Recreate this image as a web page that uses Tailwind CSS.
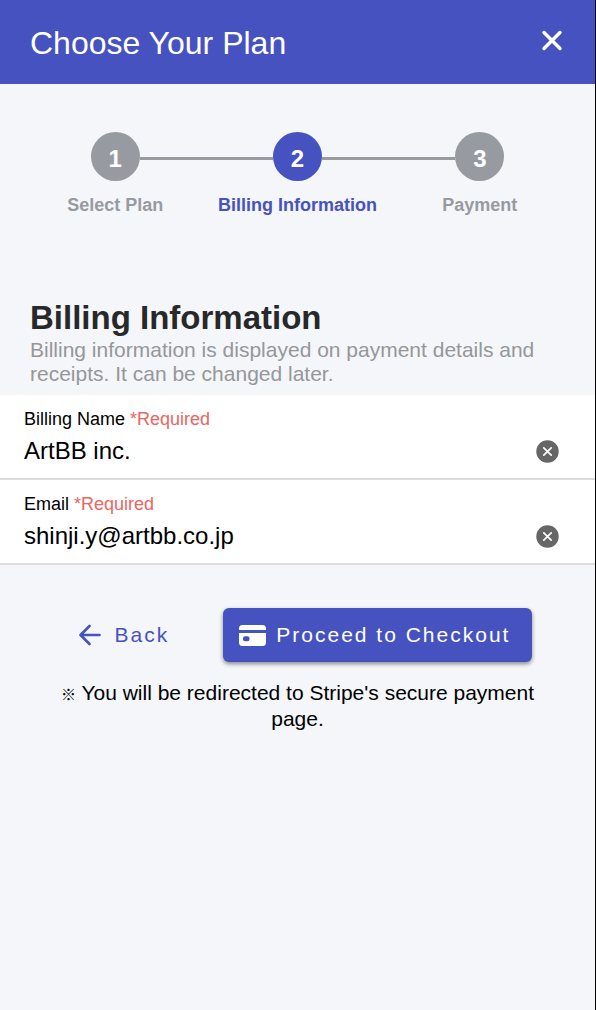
<!DOCTYPE html>
<html lang="en">
<head>
    <meta charset="UTF-8">
    <meta name="viewport" content="width=device-width, initial-scale=1.0">
    <title>Choose Your Plan</title>
    <script src="https://cdn.jsdelivr.net/npm/@tailwindcss/browser@4"></script>
</head>
<body class="min-h-screen border-r border-black bg-[#f4f6fa] font-['Liberation_Sans','Noto_Sans_CJK_JP',sans-serif] text-black">
    <header class="flex h-[84px] items-center justify-between bg-[#4652bf] pl-[30px] pr-8 text-white">
        <h1 class="pt-0.5 text-[32px] leading-10">Choose Your Plan</h1>
        <button type="button" aria-label="Close" class="pb-1">
            <svg class="size-[22px]" viewBox="0 0 22 22" fill="none" stroke="currentColor" stroke-width="3.4" stroke-linecap="round">
                <path d="M3 3.500l16 16M19 3.500L3 19.500"/>
            </svg>
        </button>
    </header>

    <main>
        <!-- Steps -->
        <ol class="grid grid-cols-3 px-6 pt-12 text-center text-[18px] font-bold text-[#989aa1]">
            <li>
                <div class="flex items-center">
                    <span class="h-[3px] flex-1"></span>
                    <span class="flex size-[49px] items-center justify-center rounded-full bg-[#989aa1] pt-1 text-[24px] text-white">1</span>
                    <span class="mt-[3px] h-[3px] flex-1 bg-[#989aa1]"></span>
                </div>
                <p class="pt-3 leading-6">Select Plan</p>
            </li>
            <li aria-current="step">
                <div class="flex items-center">
                    <span class="mt-[3px] h-[3px] flex-1 bg-[#989aa1]"></span>
                    <span class="flex size-[49px] items-center justify-center rounded-full bg-[#4652bf] pt-1 text-[24px] text-white">2</span>
                    <span class="mt-[3px] h-[3px] flex-1 bg-[#989aa1]"></span>
                </div>
                <p class="whitespace-nowrap pt-3 leading-6 text-[#4652bf]">Billing Information</p>
            </li>
            <li>
                <div class="flex items-center">
                    <span class="mt-[3px] h-[3px] flex-1 bg-[#989aa1]"></span>
                    <span class="flex size-[49px] items-center justify-center rounded-full bg-[#989aa1] pt-1 text-[24px] text-white">3</span>
                    <span class="h-[3px] flex-1"></span>
                </div>
                <p class="pt-3 leading-6">Payment</p>
            </li>
        </ol>

        <section class="px-[30px] pt-20">
            <h2 class="text-[33px] font-bold leading-[41px] text-[#272829]">Billing Information</h2>
            <p class="text-[21px] leading-6 text-[#969799]">Billing information is displayed on payment details and receipts. It can be changed later.</p>
        </section>

        <form class="pt-[9px]">
            <div class="border-b-2 border-[#dddddd] bg-white pb-[11px] pl-6 pr-9 pt-3">
                <label for="billing-name" class="block text-[18px] leading-6">Billing Name <span class="text-[#eb6562]">*Required</span></label>
                <div class="flex items-center pt-1">
                    <input id="billing-name" type="text" value="ArtBB inc." required class="h-8 min-w-0 flex-1 text-[24px] outline-none">
                    <button type="button" aria-label="Clear billing name">
                        <svg class="size-[23px]" viewBox="0 0 23 23" fill="none">
                            <circle cx="11.5" cy="11.5" r="11.2" fill="#666666"/>
                            <path d="M7.8 7.8l7.4 7.4M15.2 7.8l-7.4 7.4" stroke="#ffffff" stroke-width="1.7" stroke-linecap="round"/>
                        </svg>
                    </button>
                </div>
            </div>
            <div class="border-b-2 border-[#dddddd] bg-white pb-[11px] pl-6 pr-9 pt-3">
                <label for="email" class="block text-[18px] leading-6">Email <span class="text-[#eb6562]">*Required</span></label>
                <div class="flex items-center pt-1">
                    <input id="email" type="email" value="shinji.y@artbb.co.jp" required class="h-8 min-w-0 flex-1 text-[24px] outline-none">
                    <button type="button" aria-label="Clear email">
                        <svg class="size-[23px]" viewBox="0 0 23 23" fill="none">
                            <circle cx="11.5" cy="11.5" r="11.2" fill="#666666"/>
                            <path d="M7.8 7.8l7.4 7.4M15.2 7.8l-7.4 7.4" stroke="#ffffff" stroke-width="1.7" stroke-linecap="round"/>
                        </svg>
                    </button>
                </div>
            </div>

            <div class="flex justify-center gap-[38px] pt-[43px] text-[21px] tracking-[2px]">
                <button type="button" class="flex h-[54px] items-center gap-[14px] px-4 text-[#4652bf]">
                    <svg class="size-[22px]" viewBox="0 0 22 22" fill="none" stroke="currentColor" stroke-width="2.6" stroke-linecap="round" stroke-linejoin="round">
                        <path d="M10.500 2L1.500 11l9 9M2 11H20.5"/>
                    </svg>
                    Back
                </button>
                <button type="submit" class="flex h-[54px] items-center gap-[10px] rounded-md bg-[#4652bf] pl-4 pr-[22px] text-white shadow-[0_2px_4px_rgba(0,0,0,0.45)]">
                    <svg class="h-[21px] w-[27px]" viewBox="0 0 27 21" fill="currentColor">
                        <path d="M0 5V3.5A3.5 3.5 0 0 1 3.500 0h20A3.500 3.500 0 0 1 27 3.500V5z"/>
                        <path fill-rule="evenodd" d="M0 8h27v9.500A3.500 3.500 0 0 1 23.500 21h-20A3.500 3.500 0 0 1 0 17.500zM6 11.200a2 2 0 0 0-2 2v1a2 2 0 0 0 2 2h2.500a2 2 0 0 0 2-2v-1a2 2 0 0 0-2-2z"/>
                    </svg>
                    Proceed to Checkout
                </button>
            </div>
            <p class="px-10 pt-[19px] text-center text-[21px] leading-6"><span class="text-[15px] font-bold">※</span> You will be redirected to Stripe's secure payment page.</p>
        </form>
    </main>
</body>
</html>
